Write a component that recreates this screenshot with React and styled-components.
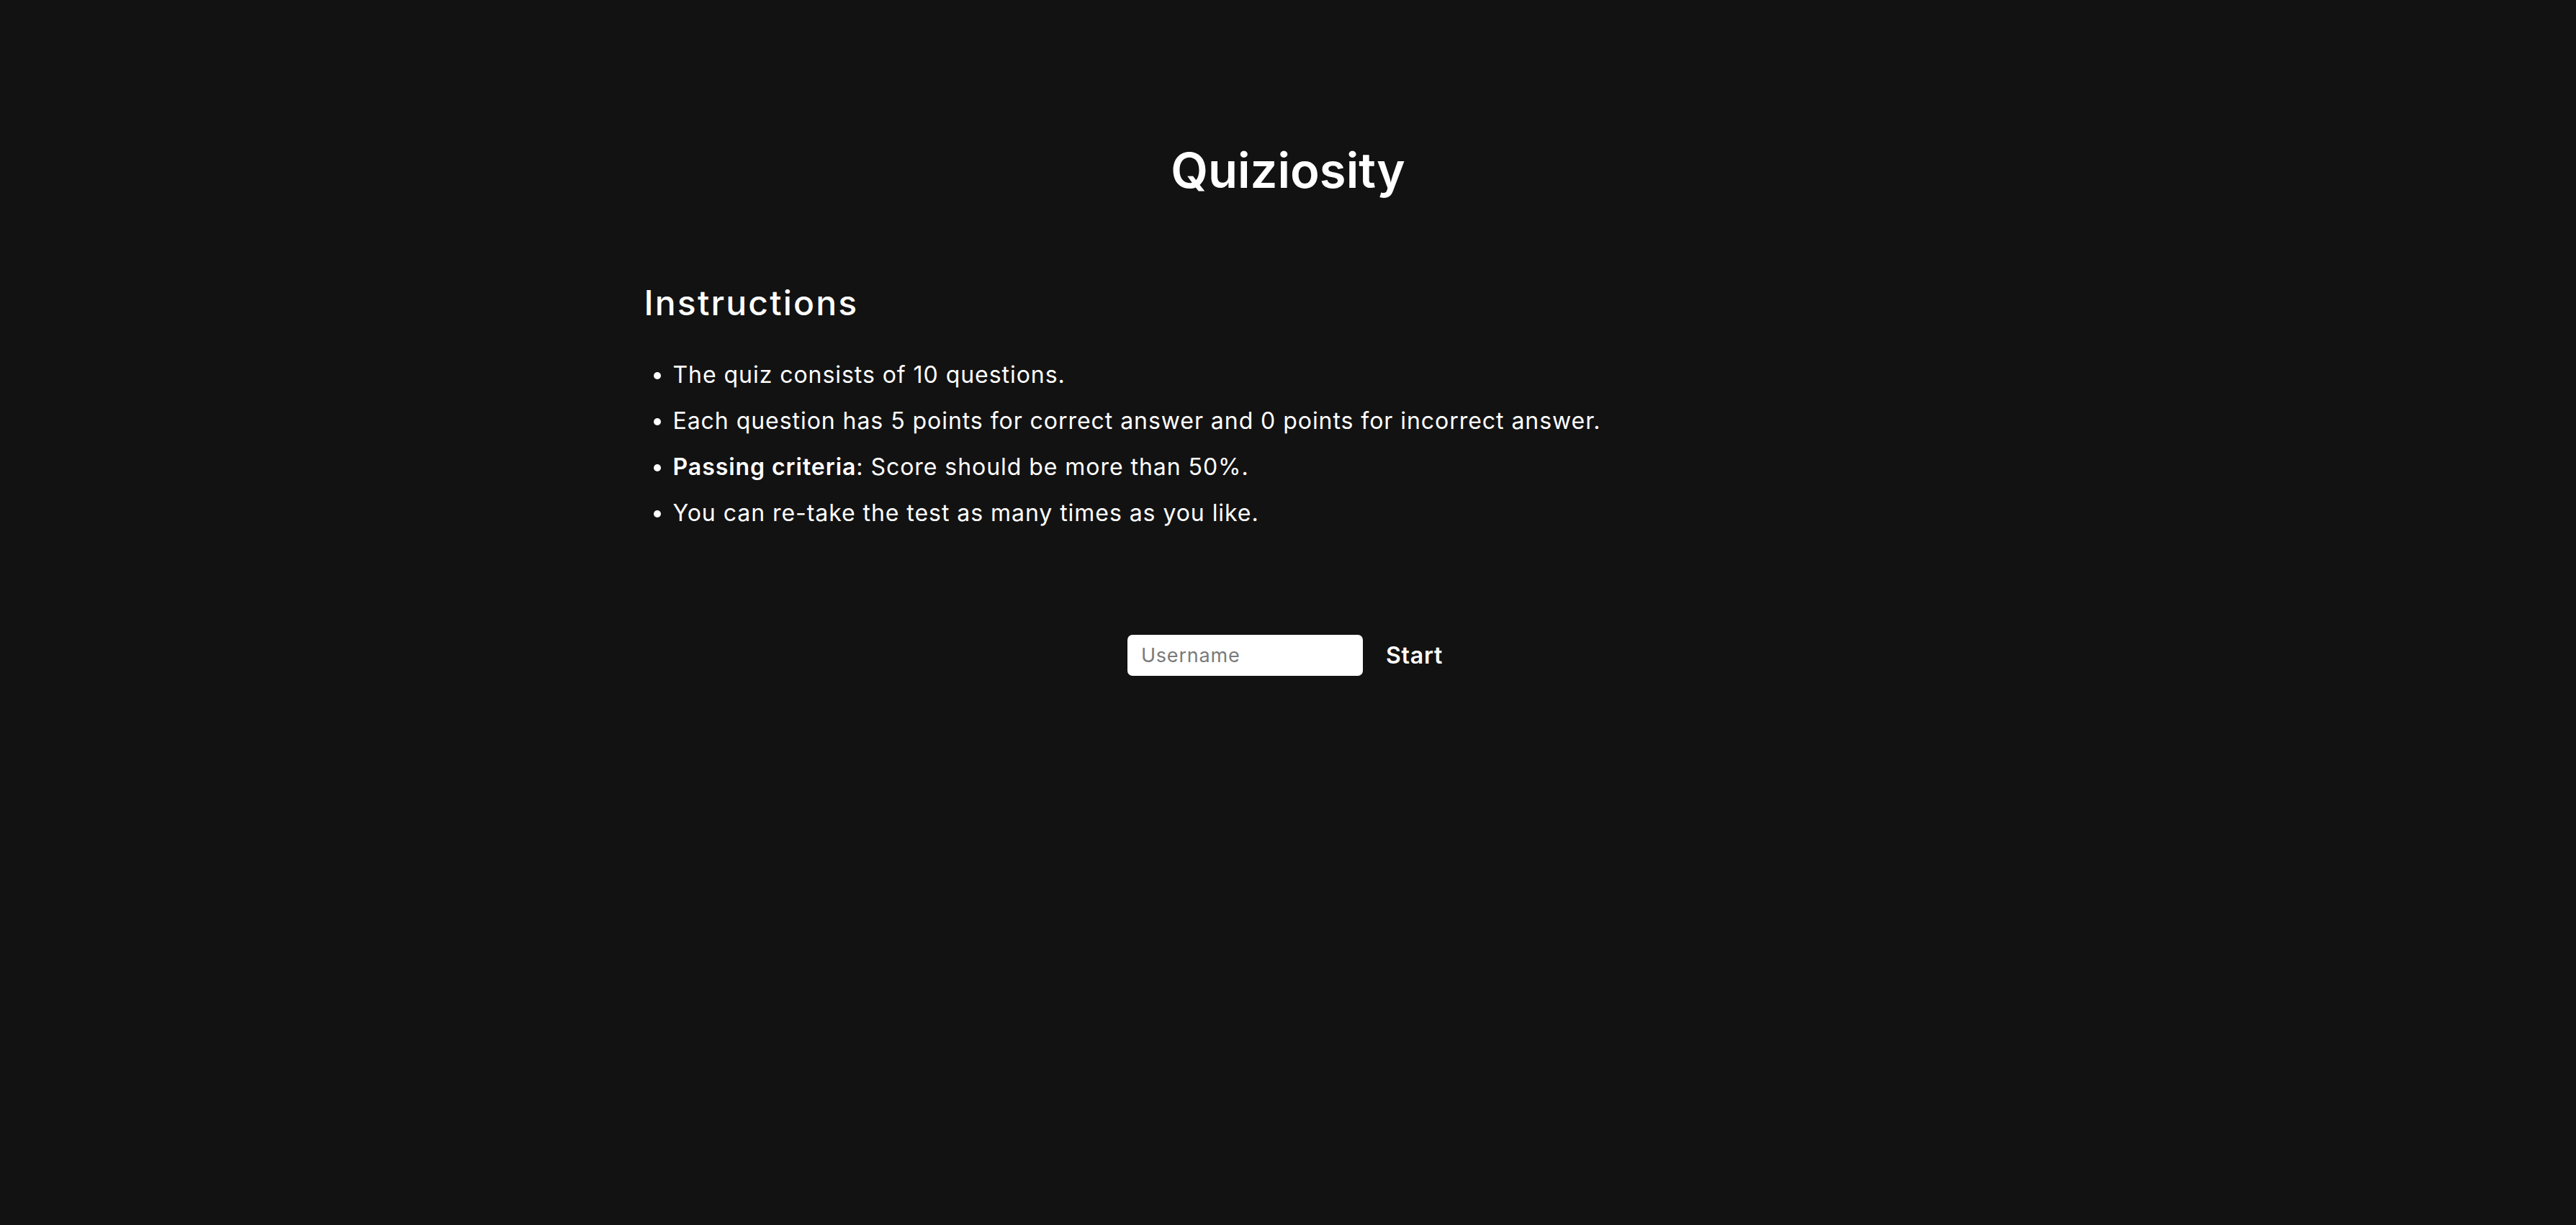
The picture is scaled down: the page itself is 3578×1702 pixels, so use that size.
import React from "react";
import styled, { createGlobalStyle } from "styled-components";

const GlobalStyle = createGlobalStyle`
  html, body {
    margin: 0;
    padding: 0;
    background: #121212;
  }
  body {
    font-family: Inter, "Open Sans", sans-serif;
    color: #ffffff;
  }
`;

const Page = styled.div`
  min-height: 100vh;
  background: #121212;
  display: flex;
  flex-direction: column;
  align-items: center;
  padding-top: 197px;
  box-sizing: border-box;
`;

const Title = styled.h1`
  margin: 0;
  font-size: 67px;
  line-height: 1.2;
  font-weight: 600;
  text-align: center;
`;

const Section = styled.section`
  width: 50%;
  margin-top: 115px;
`;

const Heading = styled.h2`
  margin: 0;
  font-size: 48px;
  line-height: 1.2;
  font-weight: 500;
  letter-spacing: 2.2px;
`;

const List = styled.ul`
  margin: 39px 0 0;
  padding-left: 40px;
`;

const Item = styled.li`
  font-size: 32px;
  line-height: 64px;
  font-weight: 400;
  letter-spacing: 0.95px;
`;

const Strong = styled.span`
  font-weight: 600;
`;

const Form = styled.div`
  display: flex;
  align-items: center;
  gap: 20px;
  margin-top: 137px;
`;

const Input = styled.input`
  width: 327px;
  height: 57px;
  box-sizing: border-box;
  border: none;
  border-radius: 7px;
  padding: 0 19px;
  font-family: Inter, "Open Sans", sans-serif;
  font-size: 27px;
  letter-spacing: 0.8px;
  color: #222;
  background: #fff;
  outline: none;

  &::placeholder {
    color: #7a7a7a;
  }
`;

const Button = styled.button`
  background: transparent;
  border: none;
  color: #fff;
  font-family: Inter, "Open Sans", sans-serif;
  font-size: 32px;
  font-weight: 600;
  letter-spacing: 0.8px;
  padding: 8px 8px 8px 12px;
  cursor: pointer;
`;

export default function App() {
  return (
    <>
      <GlobalStyle />
      <Page>
        <Title>Quiziosity</Title>
        <Section>
          <Heading>Instructions</Heading>
          <List>
            <Item>The quiz consists of 10 questions.</Item>
            <Item>Each question has 5 points for correct answer and 0 points for incorrect answer.</Item>
            <Item>
              <Strong>Passing criteria</Strong>: Score should be more than 50%.
            </Item>
            <Item>You can re-take the test as many times as you like.</Item>
          </List>
        </Section>
        <Form>
          <Input placeholder="Username" />
          <Button>Start</Button>
        </Form>
      </Page>
    </>
  );
}
